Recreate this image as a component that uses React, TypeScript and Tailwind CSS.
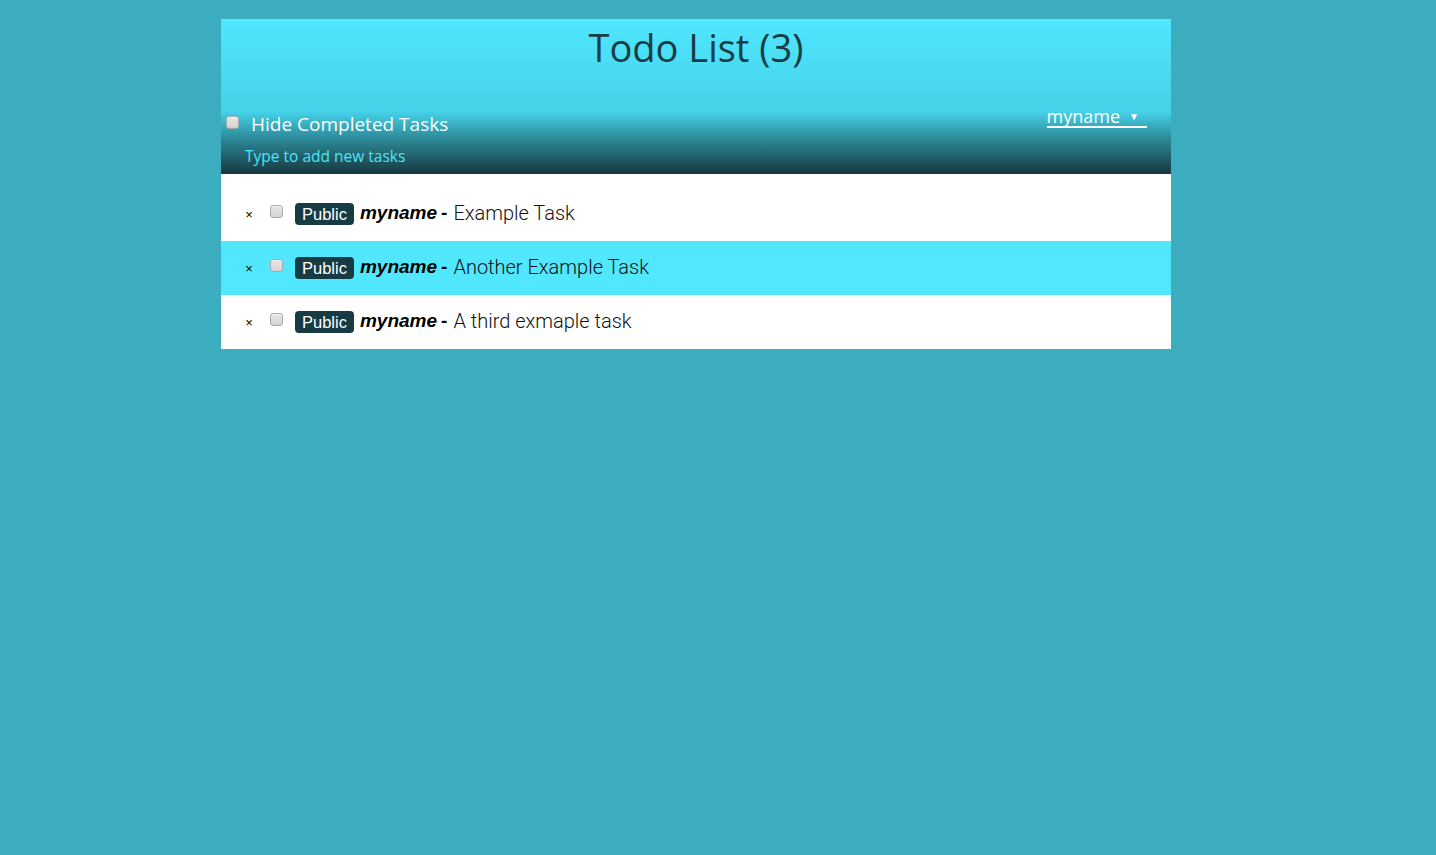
import React from "react";

const tasks = [
  { id: 1, text: "Example Task", highlight: false },
  { id: 2, text: "Another Example Task", highlight: true },
  { id: 3, text: "A third exmaple task", highlight: false },
];

function Box() {
  return (
    <span className="inline-block h-[13px] w-[13px] shrink-0 rounded-[3px] border border-[#a9a9a9] bg-gradient-to-b from-[#e6e6e6] to-[#d4d4d4] shadow-[inset_0_1px_0_#f5f5f5]" />
  );
}

export default function App() {
  return (
    <div className="min-h-screen bg-[#3cacbf] pt-[19px]">
      <div className="ml-[221px] w-[950px]">
        {/* header */}
        <header className="relative h-[155px] bg-[linear-gradient(to_bottom,#50e7ff_0%,#45d1e8_60%,#2b8795_78%,#163840_100%)] font-['Open_Sans',sans-serif]">
          <h1 className="pt-[2px] text-center text-[38px] leading-[52px] text-[#173d45]">Todo List (3)</h1>
          <div className="mt-[40px] flex items-start justify-between pr-[24px]">
            <label className="flex items-center pl-[5px]">
              <span className="-mt-[3px]"><Box /></span>
              <span className="ml-[12px] text-[19px] leading-[22px] text-white">Hide Completed Tasks</span>
            </label>
            <a className="-mt-[7px] flex items-center gap-[9px] border-b-2 border-white pr-[8px] text-[18px] leading-[20px] text-white">
              myname <span className="text-[10px] leading-[10px]">▼</span>
            </a>
          </div>
          <div className="mt-[11px] pl-[24px] text-[15.5px] leading-[20px] text-[#50e3fb]">Type to add new tasks</div>
        </header>

        {/* tasks */}
        <ul className="bg-white pt-[13px]">
          {tasks.map((t) => (
            <li
              key={t.id}
              className={`flex h-[54px] items-center ${t.highlight ? "bg-[#50e7ff]" : "bg-white"}`}
            >
              <span className="ml-[22px] w-[12px] text-center font-['Liberation_Sans',sans-serif] text-[13px] leading-none text-[#000]">×</span>
              <span className="ml-[15px] -mt-[5px]"><Box /></span>
              <span className="ml-[12px] rounded-[4px] bg-[#173b43] px-[7px] font-['Liberation_Sans',sans-serif] text-[16.5px] leading-[22px] text-white">Public</span>
              <span className="ml-[6px] -mt-[2px] font-['Liberation_Sans',sans-serif] text-[19px] font-bold italic text-black">myname</span>
              <span className="ml-[4px] -mt-[2px] font-['Liberation_Sans',sans-serif] text-[19px] font-bold text-black">-</span>
              <span className="ml-[6px] -mt-[2px] font-['Roboto',sans-serif] text-[20px] font-light text-[#111]">{t.text}</span>
            </li>
          ))}
        </ul>
      </div>
    </div>
  );
}
